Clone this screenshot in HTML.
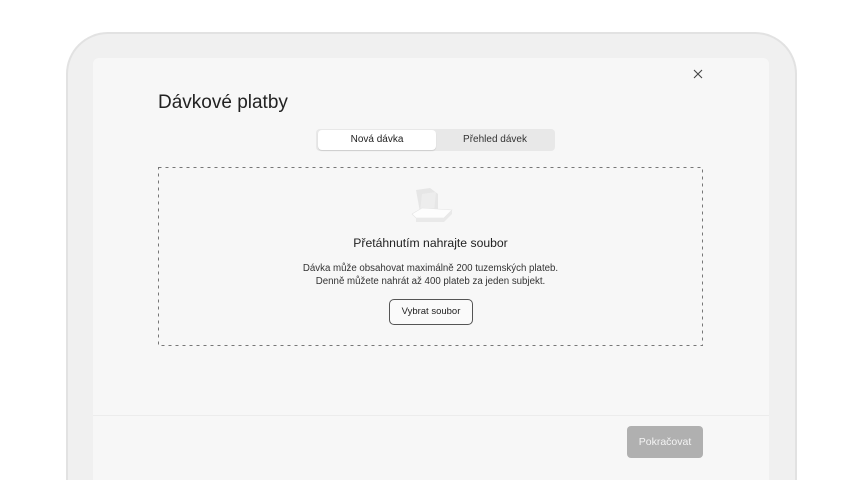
<!DOCTYPE html>
<html><head><meta charset="utf-8"><style>
html,body{margin:0;width:864px;height:480px;overflow:hidden}
body{background:#fff;font-family:"Liberation Sans",sans-serif}
#w{position:relative;width:864px;height:480px;overflow:hidden}
.dev{position:absolute;left:66px;top:32px;width:731px;height:448px;border:2px solid #e2e2e2;border-bottom:0;border-radius:42px 42px 0 0;background:#f0f0f0;box-sizing:border-box}
.pan{position:absolute;left:93px;top:58px;width:676px;height:422px;background:#f7f7f7;border-radius:6px 6px 0 0}
.t{position:absolute;color:#222}
</style></head><body><div id="w">
<div class="dev"></div>
<div class="pan"></div>
<svg style="position:absolute;left:693px;top:69px" width="10" height="10"><path d="M1 1L9 9M9 1L1 9" stroke="#444" stroke-width="1.1"/></svg>
<div class="t" style="left:158px;top:92px;font-size:19px;color:#222">Dávkové platby</div>
<div style="position:absolute;left:316px;top:129px;width:239px;height:22px;background:#e8e8e8;border-radius:4px"></div>
<div style="position:absolute;left:318px;top:130px;width:118px;height:20px;background:#fff;border-radius:4px;box-shadow:0 1px 1px rgba(0,0,0,.12)"></div>
<div class="t" style="left:318px;top:134px;width:118px;text-align:center;font-size:10px">Nová dávka</div>
<div class="t" style="left:436px;top:134px;width:118px;text-align:center;font-size:10px;color:#333">Přehled dávek</div>
<svg style="position:absolute;left:158px;top:167px" width="546" height="180"><rect x="0.5" y="0.5" width="544" height="178" fill="none" stroke="#777" stroke-dasharray="3 4"/></svg>
<svg style="position:absolute;left:408px;top:186px" width="48" height="40"><path d="M8 4 L22 2 L30 8 L30 24 L12 26Z" fill="#e6e6e6"/><path d="M14 8 L28 6 L26 26 L12 26Z" fill="#ededed"/><path d="M4 28 L14 22 L44 24 L36 32 L8 32Z" fill="#fdfdfd" stroke="#e4e4e4" stroke-width=".6"/><path d="M8 32 L36 32 L44 24 L44 28 L36 36 L8 36Z" fill="#e9e9e9"/></svg>
<div class="t" style="left:158px;top:236px;width:545px;text-align:center;font-size:12.2px">Přetáhnutím nahrajte soubor</div>
<div class="t" style="left:158px;top:263px;width:545px;text-align:center;font-size:9.7px;line-height:12.5px;color:#333">Dávka může obsahovat maximálně 200 tuzemských plateb.<br>Denně můžete nahrát až 400 plateb za jeden subjekt.</div>
<div style="position:absolute;left:389px;top:299px;width:84px;height:26px;border:1px solid #555;border-radius:5px;box-sizing:border-box;font-size:9.5px;text-align:center;line-height:24px;color:#222;background:#fafafa">Vybrat soubor</div>
<div style="position:absolute;left:93px;top:415px;width:676px;height:1px;background:#ececec"></div>
<div style="position:absolute;left:627px;top:426px;width:76px;height:32px;border-radius:4px;background:#b0b0b0;color:#f4f4f4;font-size:10.5px;text-align:center;line-height:32px">Pokračovat</div>
</div></body></html>
